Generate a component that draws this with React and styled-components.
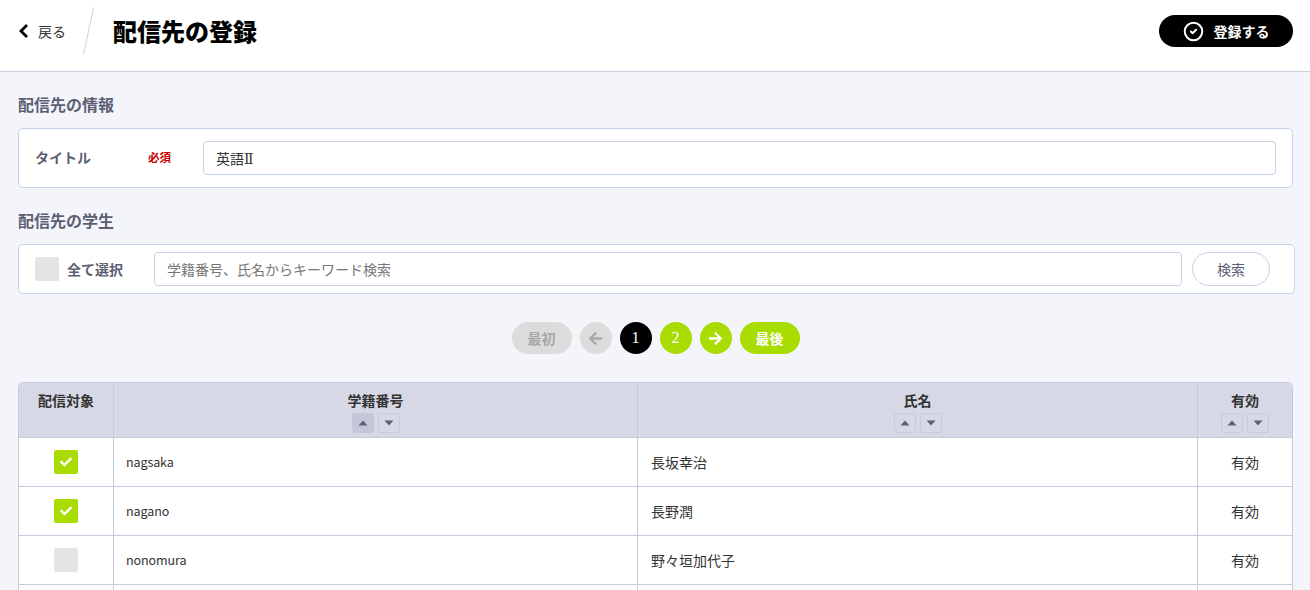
import React from "react";
import styled, { createGlobalStyle } from "styled-components";
import { FaArrowLeft, FaArrowRight, FaCheck } from "react-icons/fa";
import { CircleCheck } from "lucide-react";

const GlobalStyle = createGlobalStyle`
  html, body { margin: 0; padding: 0; height: 590px; overflow: hidden; }
  body {
    background: #f3f5fa;
    color: #333;
    font-family: "Noto Sans CJK JP", "Noto Sans", sans-serif;
  }
  * { box-sizing: border-box; }
`;

const Header = styled.header`
  height: 72px;
  background: #fff;
  border-bottom: 1px solid #c9d0de;
  display: flex;
  align-items: center;
  padding: 0 17px 9px 18px;
`;

const BackLink = styled.a`
  display: flex;
  align-items: center;
  gap: 10px;
  font-size: 14px;
  color: #333;
`;

const Slash = styled.span`
  width: 1px;
  height: 48px;
  margin: 0 24px 0 22px;
  background: #c9d3e0;
  transform: rotate(12deg);
`;

const PageTitle = styled.h1`
  flex: 1;
  margin: 0;
  padding-bottom: 2px;
  font-size: 24px;
  font-weight: 900;
  color: #000;
`;

const SubmitButton = styled.button`
  width: 134px;
  height: 32px;
  border: 0;
  border-radius: 16px;
  background: #000;
  color: #fff;
  font: 700 14px "Noto Sans CJK JP", sans-serif;
  display: flex;
  align-items: center;
  justify-content: center;
  gap: 10px;
`;

const Main = styled.main`
  padding: 0 17px 0 18px;
`;

const SectionTitle = styled.h2`
  margin: 0;
  height: 56px;
  padding-top: 20px;
  font-size: 16px;
  line-height: 24px;
  font-weight: 700;
  color: #5c5f73;
`;

const Card = styled.div`
  background: #fff;
  border: 1px solid #c5d3e6;
  border-radius: 5px;
  display: flex;
  align-items: center;
`;

const TitleCard = styled(Card)`
  height: 60px;
  padding: 0 16px;
`;

const SearchCard = styled(Card)`
  height: 50px;
  width: 1277px;
  padding: 0 24px 0 16px;
`;

const FieldLabel = styled.span`
  width: 113px;
  padding-bottom: 2px;
  font-size: 14px;
  font-weight: 700;
  color: #5c5f73;
`;

const Required = styled.span`
  width: 55px;
  padding-bottom: 2px;
  font-size: 11.5px;
  font-weight: 700;
  color: #c90000;
`;

const TextInput = styled.input`
  flex: 1;
  min-width: 0;
  height: 34px;
  padding: 0 12px;
  background: #fff;
  border: 1px solid #c5d3e6;
  border-radius: 4px;
  color: #333;
  font: 14px "Noto Sans CJK JP", sans-serif;
  &::placeholder { color: #777; opacity: 1; }
`;

/* DejaVu only supplies the roman numeral here, the kanji fall through to Noto */
const TitleInput = styled(TextInput)`
  font-family: "DejaVu Serif", "Noto Sans CJK JP", sans-serif;
`;

const CheckBox = styled.span`
  flex: none;
  width: 24px;
  height: 24px;
  border-radius: 2px;
  background: ${(p) => (p.$checked ? "#a9dc00" : "#e4e4e4")};
  color: #fff;
  display: inline-flex;
  align-items: center;
  justify-content: center;
  vertical-align: middle;
  font-size: 12px;
`;

const SelectAll = styled.span`
  width: 87px;
  margin-left: 8px;
  font-size: 14px;
  font-weight: 700;
  color: #5c5f73;
`;

const SearchButton = styled.button`
  flex: none;
  width: 78px;
  height: 34px;
  margin-left: 10px;
  background: #fff;
  border: 1px solid #c5d3e6;
  border-radius: 17px;
  color: #5c5f73;
  font: 14px "Noto Sans CJK JP", sans-serif;
`;

const Pager = styled.nav`
  display: flex;
  justify-content: center;
  gap: 8px;
  margin: 28px 0;
`;

const PageButton = styled.span`
  height: 32px;
  min-width: 32px;
  padding: 0 ${(p) => (p.$wide ? "16px" : "0")};
  border-radius: 16px;
  display: flex;
  align-items: center;
  justify-content: center;
  font-size: 14px;
  font-weight: 700;
  background: ${(p) => (p.$active ? "#000" : p.$disabled ? "#dcdcdc" : "#a9dc00")};
  color: ${(p) => (p.$disabled ? "#a8a8a8" : "#fff")};
  svg { font-size: 15px; }
`;

const PageNumber = styled(PageButton)`
  font-family: "Liberation Serif", serif;
  font-size: 16px;
  font-weight: 400;
`;

const Table = styled.table`
  width: 1275px;
  table-layout: fixed;
  border-collapse: separate;
  border-spacing: 0;
  background: #fff;
  border: 1px solid #c8c9dc;
  border-bottom: 0;
  border-radius: 5px 5px 0 0;
  overflow: hidden;
  font-size: 14px;
`;

const Th = styled.th`
  height: 55px;
  padding: 7px 0 0;
  vertical-align: top;
  background: #d6d8e5;
  font-size: 14px;
  line-height: 20px;
  font-weight: 700;
  color: #333;
  border-right: 1px solid #c8c9dc;
  border-bottom: 1px solid #c8c9dc;
  &:last-child { border-right: 0; }
`;

const SortRow = styled.div`
  display: flex;
  justify-content: center;
  gap: 4px;
  margin-top: 3px;
`;

const SortButton = styled.span`
  width: 22px;
  height: 20px;
  border: 1px solid ${(p) => (p.$active ? "#c4c7da" : "#c8c9dc")};
  border-radius: 3px;
  background: ${(p) => (p.$active ? "#c4c7da" : "transparent")};
  display: flex;
  align-items: center;
  justify-content: center;
`;

const Td = styled.td`
  height: 49px;
  padding: 0 13px;
  text-align: ${(p) => (p.$center ? "center" : "left")};
  border-right: 1px solid #c8c9dc;
  border-bottom: 1px solid #c8c9dc;
  color: #333;
  &:last-child { border-right: 0; }
`;

const IdCell = styled(Td)`
  padding: 0 12px 2px;
  font-size: 12.5px;
  letter-spacing: -0.1px;
`;

const Chevron = () => (
  <svg width="10" height="14" viewBox="0 0 10 14">
    <path d="M9 1 L3 7 L9 13" fill="none" stroke="#000" strokeWidth="2.8" />
  </svg>
);

const Caret = ({ up }) => (
  <svg width="10" height="6" viewBox="0 0 10 6">
    <path d={up ? "M5 0.5 L9.5 5.5 H0.5 Z" : "M0.5 0.5 H9.5 L5 5.5 Z"} fill="#5c5f7e" />
  </svg>
);

const Sort = ({ active }) => (
  <SortRow>
    <SortButton $active={active}><Caret up /></SortButton>
    <SortButton><Caret /></SortButton>
  </SortRow>
);

const students = [
  { id: "nagsaka", name: "長坂幸治", checked: true, state: "有効" },
  { id: "nagano", name: "長野潤", checked: true, state: "有効" },
  { id: "nonomura", name: "野々垣加代子", checked: false, state: "有効" },
  { id: "", name: "", checked: false, state: "" },
];

export default function App() {
  return (
    <>
      <GlobalStyle />
      <Header>
        <BackLink><Chevron />戻る</BackLink>
        <Slash />
        <PageTitle>配信先の登録</PageTitle>
        <SubmitButton><CircleCheck size={21} strokeWidth={2.3} />登録する</SubmitButton>
      </Header>
      <Main>
        <SectionTitle>配信先の情報</SectionTitle>
        <TitleCard>
          <FieldLabel>タイトル</FieldLabel>
          <Required>必須</Required>
          <TitleInput defaultValue="英語Ⅱ" />
        </TitleCard>
        <SectionTitle>配信先の学生</SectionTitle>
        <SearchCard>
          <CheckBox />
          <SelectAll>全て選択</SelectAll>
          <TextInput placeholder="学籍番号、氏名からキーワード検索" />
          <SearchButton>検索</SearchButton>
        </SearchCard>
        <Pager>
          <PageButton $wide $disabled>最初</PageButton>
          <PageButton $disabled><FaArrowLeft /></PageButton>
          <PageNumber $active>1</PageNumber>
          <PageNumber>2</PageNumber>
          <PageButton><FaArrowRight /></PageButton>
          <PageButton $wide>最後</PageButton>
        </Pager>
        <Table>
          <colgroup>
            <col style={{ width: 95 }} />
            <col style={{ width: 524 }} />
            <col style={{ width: 560 }} />
            <col />
          </colgroup>
          <thead>
            <tr>
              <Th>配信対象</Th>
              <Th>学籍番号<Sort active /></Th>
              <Th>氏名<Sort /></Th>
              <Th>有効<Sort /></Th>
            </tr>
          </thead>
          <tbody>
            {students.map((s, i) => (
              <tr key={i}>
                <Td $center><CheckBox $checked={s.checked}>{s.checked && <FaCheck />}</CheckBox></Td>
                <IdCell>{s.id}</IdCell>
                <Td>{s.name}</Td>
                <Td $center>{s.state}</Td>
              </tr>
            ))}
          </tbody>
        </Table>
      </Main>
    </>
  );
}
